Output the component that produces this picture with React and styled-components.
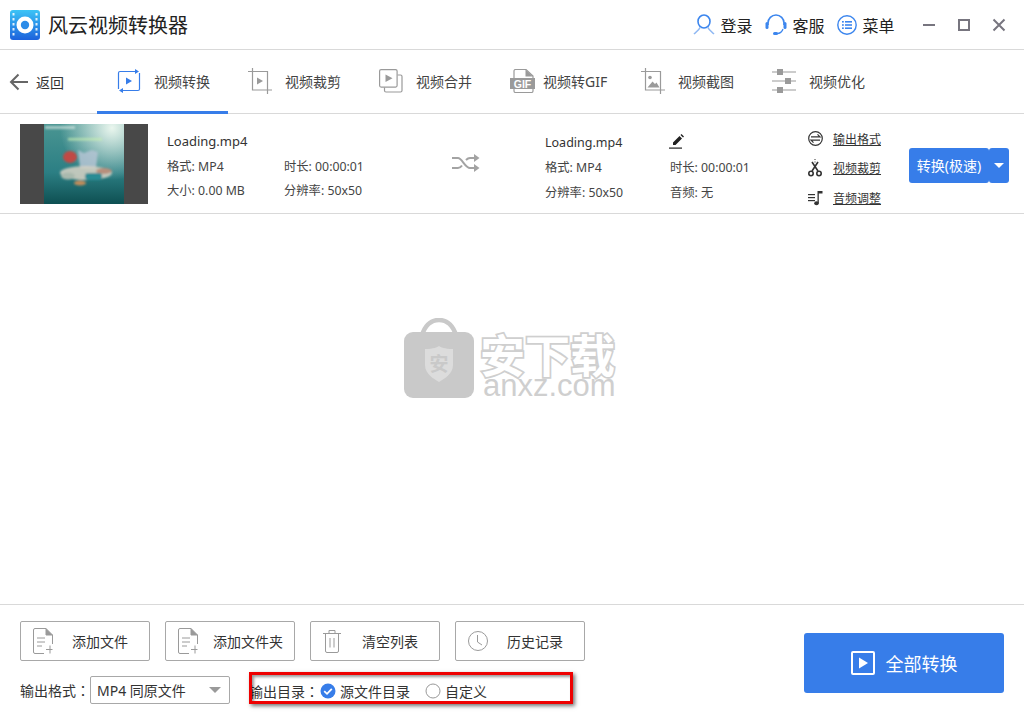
import React from 'react';
import styled, { createGlobalStyle } from 'styled-components';

const GlobalStyle = createGlobalStyle`
  html, body {
    margin: 0;
    padding: 0;
    background: #fff;
  }
  * {
    box-sizing: border-box;
  }
`;

const blue = '#377de9';
const line = '#d9d9d9';
const iconGray = '#9a9a9a';

function Logo() {
  return (
    <svg width="30" height="30" viewBox="0 0 30 30">
      <defs>
        <linearGradient id="logoFill" x1="0" y1="0" x2="0" y2="1">
          <stop offset="0" stopColor="#3cc4f6" />
          <stop offset="1" stopColor="#1c62dc" />
        </linearGradient>
      </defs>
      <rect width="30" height="30" rx="3" fill="url(#logoFill)" />
      {[3, 8, 13, 18, 23].map((y) => (
        <g key={y} fill="#fff" opacity="0.85">
          <rect x="2.5" y={y} width="2" height="2.5" />
          <rect x="25.5" y={y} width="2" height="2.5" />
        </g>
      ))}
      <circle cx="15" cy="15" r="8.5" fill="#fff" />
      <circle cx="15" cy="15" r="4.2" fill="#2b8be8" />
    </svg>
  );
}

function UserIcon() {
  return (
    <svg width="22" height="22" viewBox="0 0 22 22" fill="none" strokeWidth="1.6">
      <ellipse cx="11" cy="7.5" rx="6" ry="6.5" stroke="#3c86ee" />
      <path d="M7.5 13C6 16 3.5 17.5 1 20" stroke="#8fb8f3" />
      <path d="M14.5 13C16 16 18.5 17.5 21 20" stroke="#8fb8f3" />
    </svg>
  );
}

function ServiceIcon() {
  return (
    <svg width="22" height="24" viewBox="0 0 22 24" fill="none">
      <path d="M3 12V10a8 8 0 0 1 16 0v2" stroke="#3c86ee" strokeWidth="1.6" />
      <rect x="0.5" y="9" width="3" height="7" rx="1.5" fill="#3c86ee" />
      <rect x="18.5" y="9" width="3" height="7" rx="1.5" fill="#3c86ee" />
      <path d="M18 16c-1 3-3 4.5-6 4.5" stroke="#3c86ee" strokeWidth="1.3" />
      <rect x="8" y="19" width="5" height="3" rx="1.5" fill="#3c86ee" />
    </svg>
  );
}

function MenuIcon() {
  return (
    <svg width="20" height="20" viewBox="0 0 20 20" fill="none">
      <circle cx="10" cy="10" r="9.2" stroke="#3c86ee" strokeWidth="1.4" />
      <g fill="#3c86ee">
        <rect x="5" y="6" width="1.8" height="1.6" />
        <rect x="8" y="6" width="7" height="1.6" />
        <rect x="5" y="9.2" width="1.8" height="1.6" />
        <rect x="8" y="9.2" width="7" height="1.6" />
        <rect x="5" y="12.4" width="1.8" height="1.6" />
        <rect x="8" y="12.4" width="7" height="1.6" />
      </g>
    </svg>
  );
}

function MinIcon() {
  return (
    <svg width="14" height="14" viewBox="0 0 14 14">
      <rect x="1" y="6" width="12" height="2" fill="#77757f" />
    </svg>
  );
}

function MaxIcon() {
  return (
    <svg width="14" height="14" viewBox="0 0 14 14" fill="none">
      <rect x="2" y="2" width="10" height="10" stroke="#77757f" strokeWidth="2" />
    </svg>
  );
}

function CloseIcon() {
  return (
    <svg width="14" height="14" viewBox="0 0 14 14" fill="none">
      <path d="M1.5 1.5L12.5 12.5M12.5 1.5L1.5 12.5" stroke="#77757f" strokeWidth="2" />
    </svg>
  );
}

function BackIcon() {
  return (
    <svg width="20" height="18" viewBox="0 0 20 18" fill="none" stroke="#666" strokeWidth="2">
      <path d="M19 9H2M9.5 1.5L2 9l7.5 7.5" />
    </svg>
  );
}

function ConvertIcon() {
  return (
    <svg width="24" height="26" viewBox="0 0 24 26" fill="none" stroke={blue} strokeWidth="1.2">
      <path d="M18 3.5H3a1.5 1.5 0 0 0-1.5 1.5v16" />
      <path d="M6 22.5h15a1.5 1.5 0 0 0 1.5-1.5V5" />
      <path d="M18 1v5l4-2.5zM6 20v5l-4-2.5z" fill={blue} stroke="none" />
      <path d="M9 9.5v7l6-3.5z" fill={blue} stroke="none" />
    </svg>
  );
}

function CropIcon() {
  return (
    <svg width="24" height="26" viewBox="0 0 24 26" fill="none" stroke={iconGray} strokeWidth="1.2">
      <path d="M0 3.5h4.5V0M4.5 3.5H19.5V22M4.5 3.5V22H24M19.5 22v4" />
      <path d="M9 9.5v7l6-3.5z" fill={iconGray} stroke="none" />
    </svg>
  );
}

function MergeIcon() {
  return (
    <svg width="24" height="24" viewBox="0 0 24 24" fill="none" stroke={iconGray} strokeWidth="1.2">
      <rect x="0.6" y="0.6" width="17.5" height="17.5" rx="1.5" />
      <path d="M18.5 6h3a1.5 1.5 0 0 1 1.5 1.5v14a1.5 1.5 0 0 1-1.5 1.5H7a1.5 1.5 0 0 1-1.5-1.5V18.5" />
      <path d="M6.5 5.5v7.5l7-3.8z" fill={iconGray} stroke="none" />
    </svg>
  );
}

function GifIcon() {
  return (
    <svg width="26" height="24" viewBox="0 0 26 24" fill="none">
      <path d="M4 9V2a1.5 1.5 0 0 1 1.5-1.5H16L23 7v2M4 19v3a1.5 1.5 0 0 0 1.5 1.5h16A1.5 1.5 0 0 0 23 22v-3" stroke={iconGray} strokeWidth="1.2" />
      <path d="M15.5 0.5V7.5H23z" fill={iconGray} />
      <rect y="9" width="25" height="11" fill={iconGray} />
      <GifText x="12.5" y="18.6" textAnchor="middle">GIF</GifText>
    </svg>
  );
}

function ShotIcon() {
  return (
    <svg width="24" height="26" viewBox="0 0 24 26" fill="none" stroke={iconGray} strokeWidth="1.2">
      <path d="M0 3.5h4.5V0M4.5 3.5H19.5V22M4.5 3.5V22H24M19.5 22v4" />
      <circle cx="9" cy="9.5" r="1.8" fill={iconGray} stroke="none" />
      <path d="M6.5 19.5l5-6 2.5 2.5 1.5-1.5 3 5z" fill={iconGray} stroke="none" />
    </svg>
  );
}

function TuneIcon() {
  return (
    <svg width="24" height="24" viewBox="0 0 24 24" fill={iconGray}>
      <rect y="2.5" width="24" height="1" />
      <rect x="5" y="0" width="6" height="6" />
      <rect y="11.5" width="24" height="1" />
      <rect x="13" y="9" width="6" height="6" />
      <rect y="20.5" width="24" height="1" />
      <rect x="5" y="18" width="6" height="6" />
    </svg>
  );
}

function ShuffleIcon() {
  return (
    <svg width="28" height="18" viewBox="0 0 28 18" fill="none" stroke="#a3a3a3" strokeWidth="2">
      <path d="M0 4h6c4 0 7 10 12 10h5M0 14h6c1.5 0 3-1 4-2.5M14 6c1-1 2.5-2 4-2h5" />
      <path d="M22 0l5.5 4-5.5 4zM22 10l5.5 4-5.5 4z" fill="#a3a3a3" stroke="none" />
    </svg>
  );
}

function EditIcon() {
  return (
    <svg width="16" height="16" viewBox="0 0 16 16">
      <path d="M4 9.5L10.5 3l2.5 2.5L6.5 12H4zM11.5 2l1-1 2.5 2.5-1 1z" fill="#222" />
      <rect x="0" y="14.5" width="13" height="1.2" fill="#222" />
    </svg>
  );
}

function FormatIcon() {
  return (
    <svg width="15" height="15" viewBox="0 0 15 15" fill="none" stroke="#333" strokeWidth="1.2">
      <circle cx="7.5" cy="7.5" r="6.8" />
      <path d="M3 5.8h9L9.5 3.3M12 9.2H3l2.5 2.5" />
    </svg>
  );
}

function ScissorsIcon() {
  return (
    <svg width="14" height="18" viewBox="0 0 14 18" fill="none" stroke="#333" strokeWidth="1.6">
      <path d="M4 12L10 3M10 12L4 3" />
      <circle cx="3" cy="14.5" r="2.2" />
      <circle cx="11" cy="14.5" r="2.2" />
      <path d="M7 0v1M7 2.5v1" strokeWidth="1" />
    </svg>
  );
}

function MusicIcon() {
  return (
    <svg width="16" height="16" viewBox="0 0 16 16" fill="#333">
      <rect x="0" y="4" width="7" height="1.2" />
      <rect x="0" y="7" width="7" height="1.2" />
      <rect x="0" y="10" width="7" height="1.2" />
      <rect x="9.5" y="1" width="1.3" height="12" />
      <path d="M10 1h4.5v2.5H10z" />
      <ellipse cx="8.5" cy="13.3" rx="2.3" ry="2" />
    </svg>
  );
}

function FileAddIcon() {
  return (
    <svg width="20" height="26" viewBox="0 0 20 26" fill="none" stroke={iconGray} strokeWidth="1">
      <path d="M13 0.5H2A1.5 1.5 0 0 0 0.5 2v22A1.5 1.5 0 0 0 2 25.5h9M19.5 7v9" />
      <path d="M13 0.5v6.5h6.5z" fill={iconGray} />
      <path d="M4 10h8M4 14h8M4 18h5M17 17.5v8M13 21.5h6.5" />
    </svg>
  );
}

function TrashIcon() {
  return (
    <svg width="20" height="24" viewBox="0 0 20 24" fill="none" stroke={iconGray} strokeWidth="1">
      <path d="M0 4.5h18M6 4.5V1.5h6v3M2.5 4.5V22a1.5 1.5 0 0 0 1.5 1.5h10a1.5 1.5 0 0 0 1.5-1.5V4.5M7 9v9.5M11 9v9.5" />
    </svg>
  );
}

function ClockIcon() {
  return (
    <svg width="20" height="20" viewBox="0 0 20 20" fill="none" stroke={iconGray} strokeWidth="1">
      <circle cx="10" cy="10" r="9.5" />
      <path d="M9.5 4v7l4.5 3" />
    </svg>
  );
}

function PlayBoxIcon() {
  return (
    <svg width="24" height="24" viewBox="0 0 24 24" fill="none">
      <rect x="1" y="1" width="22" height="22" rx="1" stroke="#fff" strokeWidth="2" />
      <path d="M8 6.5v11l9-5.5z" fill="#fff" />
    </svg>
  );
}

function CheckedRadio() {
  return (
    <svg width="16" height="16" viewBox="0 0 16 16">
      <circle cx="8" cy="8" r="7.5" fill={blue} />
      <path d="M4.2 8.2l2.8 2.6 4.8-5" fill="none" stroke="#fff" strokeWidth="1.8" />
    </svg>
  );
}

function EmptyRadio() {
  return (
    <svg width="16" height="16" viewBox="0 0 16 16">
      <circle cx="8" cy="8" r="7" fill="#fff" stroke="#999" strokeWidth="1" />
    </svg>
  );
}

function ThumbArt() {
  return (
    <svg width="80" height="80" viewBox="0 0 80 80">
      <defs>
        <linearGradient id="thumbBg" x1="0" y1="0" x2="0" y2="1">
          <stop offset="0" stopColor="#4a9592" />
          <stop offset="0.6" stopColor="#2c7f84" />
          <stop offset="1" stopColor="#0e4f52" />
        </linearGradient>
        <radialGradient id="thumbGlow" cx="0.85" cy="0.05" r="0.65">
          <stop offset="0" stopColor="#eaf6ee" stopOpacity="1" />
          <stop offset="1" stopColor="#eaf6ee" stopOpacity="0" />
        </radialGradient>
        <filter id="soft" x="-20%" y="-20%" width="140%" height="140%">
          <feGaussianBlur stdDeviation="1.3" />
        </filter>
      </defs>
      <rect width="80" height="80" fill="url(#thumbBg)" />
      <rect width="80" height="80" fill="url(#thumbGlow)" />
      <g filter="url(#soft)">
        <rect x="1" y="2" width="30" height="3" fill="#e5efe9" opacity="0.6" />
        <rect x="24" y="14" width="34" height="2.5" fill="#c8f0b0" opacity="0.7" />
        <ellipse cx="26" cy="33" rx="7" ry="6" fill="#c04a45" />
        <path d="M34 26l6 3 8-3 6 2-2 16H36z" fill="#b4c4d4" opacity="0.85" />
        <ellipse cx="42" cy="49" rx="26" ry="7" fill="#d9d4c6" opacity="0.85" />
        <ellipse cx="24" cy="52" rx="7" ry="3.5" fill="#a9b9ae" />
        <ellipse cx="60" cy="47" rx="8" ry="3" fill="#b78f7c" />
        <rect x="41" y="49" width="17" height="7" rx="3" fill="#2a8c94" />
        <ellipse cx="36" cy="59" rx="6" ry="2.5" fill="#c08c5c" />
      </g>
    </svg>
  );
}

function Bag() {
  return (
    <svg width="70" height="80" viewBox="0 0 70 80">
      <path d="M18 17C22 5 28 2 35 2s13 3 17 15" fill="none" stroke="#c9c9c9" strokeWidth="4.5" />
      <rect y="14" width="70" height="66" rx="9" fill="#c9c9c9" />
      <path d="M21 31c9 0 12-2 14-3 2 1 5 3 14 3v16c0 9-9 14-14 17-5-3-14-8-14-17z" fill="#dcdcdc" />
      <BagMark x="35" y="53" textAnchor="middle">安</BagMark>
    </svg>
  );
}

const tabs = [
  { name: '视频转换', icon: <ConvertIcon />, active: true },
  { name: '视频裁剪', icon: <CropIcon /> },
  { name: '视频合并', icon: <MergeIcon /> },
  { name: '视频转GIF', icon: <GifIcon />, tight: true },
  { name: '视频截图', icon: <ShotIcon /> },
  { name: '视频优化', icon: <TuneIcon /> },
];

const tools = [
  { name: '添加文件', icon: <FileAddIcon />, gap: 19 },
  { name: '添加文件夹', icon: <FileAddIcon />, gap: 15 },
  { name: '清空列表', icon: <TrashIcon />, gap: 19 },
  { name: '历史记录', icon: <ClockIcon />, gap: 19 },
];

export default function App() {
  return (
    <Page>
      <GlobalStyle />
      <TitleBar>
        <Logo />
        <AppName>风云视频转换器</AppName>
        <TitleActions>
          <TitleAction><UserIcon />登录</TitleAction>
          <TitleAction><ServiceIcon />客服</TitleAction>
          <TitleAction><MenuIcon />菜单</TitleAction>
        </TitleActions>
        <WindowButtons>
          <MinIcon />
          <MaxIcon />
          <CloseIcon />
        </WindowButtons>
      </TitleBar>

      <NavBar>
        <BackLink><BackIcon />返回</BackLink>
        <Tabs>
          {tabs.map((tab) => (
            <Tab key={tab.name} $active={tab.active}>
              <TabIcon>{tab.icon}</TabIcon>
              <TabLabel $tight={tab.tight}>{tab.name}</TabLabel>
            </Tab>
          ))}
        </Tabs>
      </NavBar>

      <FileRow>
        <Thumb><ThumbArt /></Thumb>
        <SourceInfo>
          <SourceName>Loading.mp4</SourceName>
          <InfoGrid $col={117} $rows={24}>
            <span>格式: MP4</span>
            <span>时长: 00:00:01</span>
            <span>大小: 0.00 MB</span>
            <span>分辨率: 50x50</span>
          </InfoGrid>
        </SourceInfo>
        <ShuffleSlot><ShuffleIcon /></ShuffleSlot>
        <TargetInfo>
          <TargetHead>
            <TargetName>Loading.mp4</TargetName>
            <EditIcon />
          </TargetHead>
          <InfoGrid $col={125} $rows={25}>
            <span>格式: MP4</span>
            <span>时长: 00:00:01</span>
            <span>分辨率: 50x50</span>
            <span>音频: 无</span>
          </InfoGrid>
        </TargetInfo>
        <RowActions>
          <RowAction><ActionIcon><FormatIcon /></ActionIcon><u>输出格式</u></RowAction>
          <RowAction><ActionIcon><ScissorsIcon /></ActionIcon><u>视频裁剪</u></RowAction>
          <RowAction><ActionIcon><MusicIcon /></ActionIcon><u>音频调整</u></RowAction>
        </RowActions>
        <ConvertButton>
          <ConvertLabel>转换(极速)</ConvertLabel>
          <ConvertMore><ConvertCaret /></ConvertMore>
        </ConvertButton>
      </FileRow>

      <Main>
        <Watermark>
          <Bag />
          <WatermarkText>
            <WatermarkCn>安下载</WatermarkCn>
            <WatermarkEn>anxz.com</WatermarkEn>
          </WatermarkText>
        </Watermark>
      </Main>

      <Footer>
        <FooterLeft>
          <ToolRow>
            {tools.map((tool) => (
              <ToolButton key={tool.name} $gap={tool.gap}>
                <ToolIcon>{tool.icon}</ToolIcon>
                {tool.name}
              </ToolButton>
            ))}
          </ToolRow>
          <OptionRow>
            <OptionLabel>输出格式<Colon>：</Colon></OptionLabel>
            <FormatSelect>
              MP4 同原文件
              <SelectCaret />
            </FormatSelect>
            <DirGroup>
              <OptionLabel>输出目录<Colon>：</Colon></OptionLabel>
              <Radio><CheckedRadio />源文件目录</Radio>
              <Radio><EmptyRadio />自定义</Radio>
              <RedMark />
            </DirGroup>
          </OptionRow>
        </FooterLeft>
        <ConvertAll>
          <PlayBoxIcon />
          全部转换
        </ConvertAll>
      </Footer>
    </Page>
  );
}

const Page = styled.div`
  width: 1024px;
  height: 720px;
  display: flex;
  flex-direction: column;
  overflow: hidden;
  background: #fff;
  color: #333;
  font-family: 'Noto Sans', 'Noto Sans CJK SC', sans-serif;
  font-size: 12px;
`;

const TitleBar = styled.div`
  height: 50px;
  flex: none;
  display: flex;
  align-items: center;
  padding: 0 18px 0 10px;
  border-bottom: 1px solid ${line};
`;
const AppName = styled.div`
  margin-left: 8px;
  font-size: 20px;
  color: #222;
`;
const TitleActions = styled.div`
  margin-left: auto;
  display: flex;
  align-items: center;
  gap: 12.5px;
`;
const TitleAction = styled.div`
  display: flex;
  align-items: center;
  gap: 5.5px;
  font-size: 16px;
  color: #222;
`;
const WindowButtons = styled.div`
  display: flex;
  align-items: center;
  gap: 21px;
  margin-left: 27.5px;
`;

const NavBar = styled.div`
  height: 64px;
  flex: none;
  display: flex;
  align-items: stretch;
  border-bottom: 1px solid ${line};
`;
const BackLink = styled.div`
  width: 97px;
  padding-left: 9px;
  display: flex;
  align-items: center;
  gap: 7px;
  font-size: 14px;
`;
const Tabs = styled.div`
  display: flex;
`;
const Tab = styled.div`
  width: 131px;
  padding-left: 20px;
  display: flex;
  align-items: center;
  font-size: 14px;
  color: #444;
  border-bottom: 3px solid ${(p) => (p.$active ? blue : 'transparent')};
  margin-bottom: -1px;
`;
const TabIcon = styled.div`
  width: 26px;
  display: flex;
`;
const TabLabel = styled.span`
  margin-left: ${(p) => (p.$tight ? 7 : 11)}px;
`;
const GifText = styled.text`
  font-family: 'Liberation Sans', sans-serif;
  font-size: 10.5px;
  font-weight: 700;
  fill: #fff;
`;

const FileRow = styled.div`
  height: 100px;
  flex: none;
  display: flex;
  align-items: center;
  padding-left: 20px;
  border-bottom: 1px solid ${line};
`;
const Thumb = styled.div`
  width: 128px;
  height: 80px;
  flex: none;
  display: flex;
  justify-content: center;
  background: #484848;
`;
const SourceInfo = styled.div`
  width: 285px;
  margin-left: 19px;
  padding-top: 3px;
`;
const SourceName = styled.div`
  height: 25px;
  line-height: 25px;
  font-size: 13px;
`;
const InfoGrid = styled.div`
  display: grid;
  grid-template-columns: ${(p) => p.$col}px auto;
  grid-auto-rows: ${(p) => p.$rows}px;
  align-items: center;
  font-size: 12.3px;
  color: #444;
`;
const ShuffleSlot = styled.div`
  width: 93px;
  display: flex;
  padding-bottom: 2px;
`;
const TargetInfo = styled.div`
  width: 263px;
  padding-top: 3px;
`;
const TargetHead = styled.div`
  height: 28px;
  display: flex;
  align-items: center;
  padding-top: 2px;
`;
const TargetName = styled.div`
  width: 124px;
  font-size: 12.5px;
  padding-top: 2px;
`;
const RowActions = styled.div`
  width: 101px;
  display: flex;
  flex-direction: column;
  gap: 9.5px;
  padding-top: 9px;
`;
const RowAction = styled.div`
  height: 20px;
  display: flex;
  align-items: center;
  font-size: 12px;
  color: #333;
`;
const ActionIcon = styled.div`
  width: 25px;
  display: flex;
`;
const ConvertButton = styled.div`
  width: 100px;
  height: 35px;
  margin-top: 4px;
  display: flex;
  color: #fff;
  font-size: 14px;
`;
const ConvertLabel = styled.div`
  width: 80px;
  padding-bottom: 2px;
  display: flex;
  align-items: center;
  justify-content: center;
  border-radius: 3px;
  background: ${blue};
`;
const ConvertMore = styled.div`
  flex: 1;
  display: flex;
  align-items: center;
  justify-content: center;
  border-radius: 3px;
  background: ${blue};
`;
const ConvertCaret = styled.div`
  width: 0;
  height: 0;
  border-style: solid;
  border-width: 5px 5px 0;
  border-color: #fff transparent transparent;
`;

const Main = styled.div`
  flex: 1;
  display: flex;
  justify-content: center;
  align-items: flex-start;
  padding-top: 104px;
`;
const Watermark = styled.div`
  display: flex;
  gap: 6px;
`;
const WatermarkText = styled.div`
  width: 140px;
  height: 80px;
  display: flex;
  flex-direction: column;
`;
const WatermarkCn = styled.div`
  height: 47px;
  margin-top: 10px;
  line-height: 52px;
  font-size: 45px;
  font-weight: 700;
  white-space: nowrap;
  font-family: 'Noto Sans CJK SC', sans-serif;
  color: #fff;
  -webkit-text-stroke: 3.5px #cfcfcf;
  paint-order: stroke fill;
`;
const WatermarkEn = styled.div`
  height: 22px;
  line-height: 22px;
  padding-left: 3px;
  font-size: 31px;
  font-family: 'Liberation Sans', sans-serif;
  color: #cfcfcf;
  white-space: nowrap;
`;
const BagMark = styled.text`
  font-family: 'Noto Sans CJK SC', sans-serif;
  font-size: 19px;
  font-weight: 700;
  fill: #c9c9c9;
`;

const Footer = styled.div`
  height: 116px;
  flex: none;
  display: flex;
  padding: 16px 20px 0;
  border-top: 1px solid ${line};
`;
const FooterLeft = styled.div`
  width: 784px;
`;
const ToolRow = styled.div`
  display: flex;
  gap: 15px;
`;
const ToolButton = styled.div`
  width: 130px;
  height: 40px;
  display: flex;
  align-items: center;
  gap: ${(p) => p.$gap}px;
  padding-left: 12px;
  border: 1px solid #a8a8a8;
  border-radius: 2px;
  font-size: 14px;
  color: #333;
`;
const ToolIcon = styled.div`
  width: 20px;
  display: flex;
`;
const OptionRow = styled.div`
  display: flex;
  align-items: center;
  margin-top: 15px;
  height: 28px;
`;
const OptionLabel = styled.span`
  width: 70px;
  flex: none;
  font-size: 14px;
  white-space: nowrap;
`;
const Colon = styled.span`
  font-family: 'Noto Sans CJK TC', sans-serif;
`;
const FormatSelect = styled.div`
  width: 140px;
  height: 28px;
  display: flex;
  align-items: center;
  justify-content: space-between;
  padding: 0 8px 0 6px;
  border: 1px solid #a8a8a8;
  border-radius: 2px;
  font-size: 14px;
`;
const SelectCaret = styled.i`
  width: 0;
  height: 0;
  border-style: solid;
  border-width: 6px 6px 0;
  border-color: #9a9a9a transparent transparent;
`;
const DirGroup = styled.div`
  position: relative;
  height: 28px;
  display: flex;
  align-items: center;
  margin-left: 19px;
  font-size: 14px;
  padding-top: 2px;
`;
const Radio = styled.div`
  display: flex;
  align-items: center;
  gap: 4px;
  margin-left: 1px;
  margin-right: 14px;
`;
const RedMark = styled.div`
  position: absolute;
  left: 0;
  top: -4px;
  width: 324px;
  height: 32px;
  border: 3px solid #ee0000;
  box-shadow: 2px 2px 4px rgba(0, 0, 0, 0.55), inset 2px 2px 3px rgba(0, 0, 0, 0.4);
`;
const ConvertAll = styled.div`
  width: 200px;
  height: 60px;
  margin-top: 12px;
  display: flex;
  align-items: center;
  justify-content: center;
  gap: 11px;
  background: ${blue};
  border-radius: 3px;
  color: #fff;
  font-size: 18px;
`;
